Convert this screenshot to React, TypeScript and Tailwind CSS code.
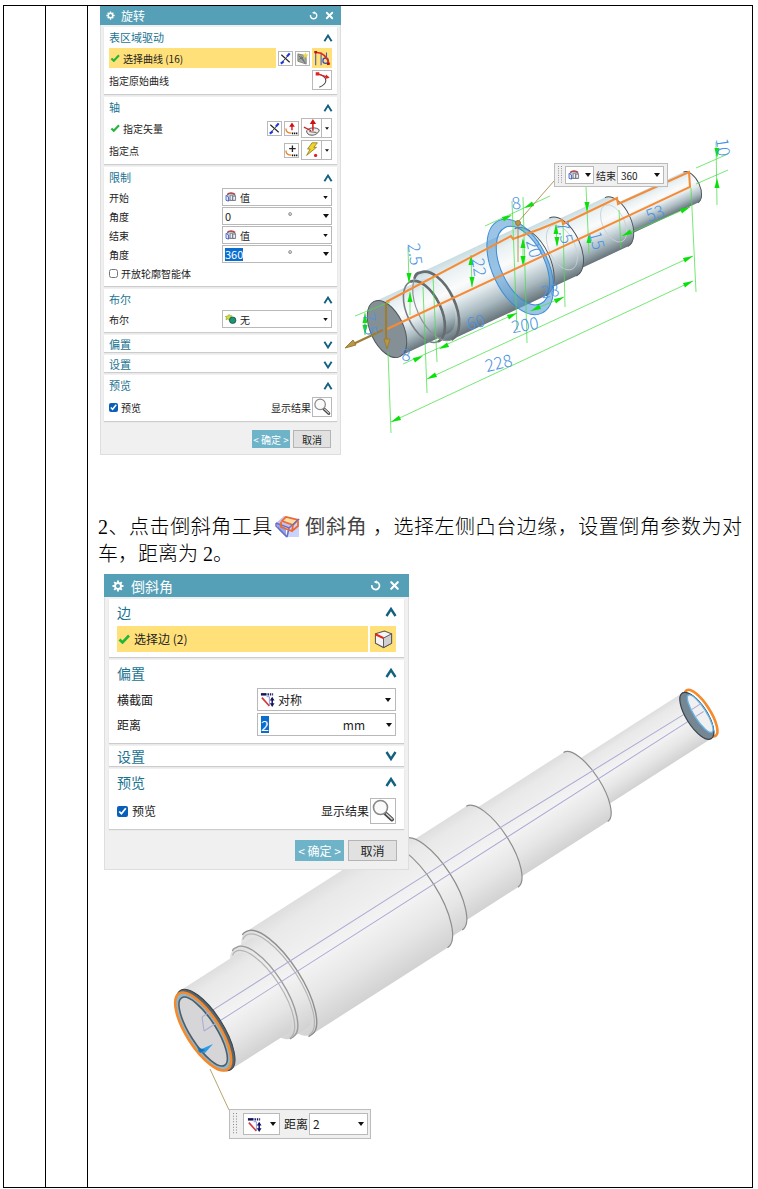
import { useState, type ReactNode } from 'react';
import { X } from 'lucide-react';
import clsx from 'clsx';

/* ---------- small icons ---------- */

function Caret({ className = 'h-[4px] w-[6px]' }: { className?: string }) {
    return (
        <svg viewBox="0 0 6 4" className={clsx('shrink-0', className)} aria-hidden="true">
            <path d="M0 0h6L3 4z" fill="#111" />
        </svg>
    );
}

function Fold({ open, large }: { open: boolean; large?: boolean }) {
    return (
        <svg viewBox="0 0 12 10" className={large ? 'h-[10px] w-[12px]' : 'h-[8px] w-[10px]'} aria-hidden="true">
            <path d={open ? 'M1.5 9L6 2l4.500 7' : 'M1.500 1L6 8l4.500-7'} fill="none" stroke="#12617f" strokeWidth="2.400" />
        </svg>
    );
}

function Gear({ large }: { large?: boolean }) {
    return (
        <svg viewBox="0 0 12 12" className={large ? 'size-[12px]' : 'size-[9px]'} aria-hidden="true">
            <path d="M6 .5v11M.5 6h11M2.200 2.200l7.600 7.600M9.800 2.200L2.200 9.800" stroke="#fff" strokeWidth="1.900" />
            <circle cx="6" cy="6" r="3" fill="#559fb7" stroke="#fff" strokeWidth="1.900" />
        </svg>
    );
}

function ResetIcon({ large }: { large?: boolean }) {
    return (
        <svg viewBox="0 0 12 12" className={large ? 'size-[11px]' : 'size-[9px]'} aria-hidden="true">
            <path d="M2 5.500A4.200 4.200 0 1 0 6.500 2" fill="none" stroke="#fff" strokeWidth="1.900" />
            <path d="M4 2.200L7.500 .2v4z" fill="#fff" />
        </svg>
    );
}

function Tick({ large }: { large?: boolean }) {
    return (
        <svg viewBox="0 0 12 10" className={large ? 'h-[10px] w-[12px]' : 'h-[8px] w-[10px]'} aria-hidden="true">
            <path d="M1.500 5.500L4.500 8.500L11 1.500" fill="none" stroke="#22b63a" strokeWidth="2.600" />
        </svg>
    );
}

function ReverseIcon() {
    return (
        <svg viewBox="0 0 14 14" className="size-[13px]" aria-hidden="true">
            <path d="M2.500 3l9 8" stroke="#222" strokeWidth="1.200" />
            <path d="M2.500 12L11 2.500" stroke="#333" strokeWidth="1" />
            <path d="M8.500 5l3-3.500M2 12.500l3-2.500" stroke="#1f3be0" strokeWidth="2.400" />
        </svg>
    );
}

function SketchIcon() {
    return (
        <svg viewBox="0 0 14 14" className="size-[13px]" aria-hidden="true">
            <path d="M2 2l9 2v9l-9-3z" fill="#a9aca0" stroke="#6a6f68" strokeWidth=".8" />
            <path d="M3 4l7 8M5 4l4 6M3 8l6-3" stroke="#555b66" strokeWidth=".8" />
            <path d="M10 0l1 2.500 2.500.5-2 1.500.5 2.500-2-1.500-2 1 .5-2.500L7 3l2.500-.5z" fill="#e8d84a" />
        </svg>
    );
}

function CurveRuleIcon() {
    return (
        <svg viewBox="0 0 20 20" className="size-[18px]" aria-hidden="true">
            <path d="M3 18V4M9 4v14M15 4v5" stroke="#4a5ab0" strokeWidth="1.200" fill="none" />
            <circle cx="14" cy="13" r="3" fill="none" stroke="#3452c4" strokeWidth="1.400" />
            <path d="M2 4c7-1 13 3 16 13" fill="none" stroke="#dd2a1c" strokeWidth="1.800" />
            <path d="M1.500 3.500h3M15.500 16.500h3" stroke="#c01010" strokeWidth="2.600" />
        </svg>
    );
}

function OriginCurveIcon() {
    return (
        <svg viewBox="0 0 20 20" className="size-[18px]" aria-hidden="true">
            <path d="M5 3c12 3 12 11 2 15" fill="none" stroke="#444" strokeWidth="1.200" />
            <path d="M4 3l13 4" stroke="#dd2222" strokeWidth="1.400" />
            <path d="M18.500 7.500l-5 1.500 1-5zM3 1.500h4V5H3z" fill="#dd2222" />
        </svg>
    );
}

function VectorDialogIcon() {
    return (
        <svg viewBox="0 0 14 14" className="size-[13px]" aria-hidden="true">
            <path d="M7.500 9V4" stroke="#d22" strokeWidth="1.600" />
            <path d="M7.500 .5l3 4.500H4.500z" fill="#c11" />
            <path d="M1 7c0 4 2 5 6 5" fill="none" stroke="#e9832a" strokeWidth="1.400" />
            <path d="M7.500 12.300h1.400m.8 0h1.400m.8 0h1.400" stroke="#111" strokeWidth="1.800" />
        </svg>
    );
}

function PointDialogIcon() {
    return (
        <svg viewBox="0 0 14 14" className="size-[13px]" aria-hidden="true">
            <path d="M8 1.500v7M4.500 5h7" stroke="#222" strokeWidth="1.400" />
            <path d="M1 7c0 4 2 5 6 5" fill="none" stroke="#e9832a" strokeWidth="1.400" />
            <path d="M7.500 12.300h1.400m.8 0h1.400m.8 0h1.400" stroke="#111" strokeWidth="1.800" />
        </svg>
    );
}

function FaceNormalIcon() {
    return (
        <svg viewBox="0 0 20 20" className="size-[18px]" aria-hidden="true">
            <path d="M4 13c3-4 11-4 14-1 0 3-4 6-8 6s-6-2-6-5z" fill="#ececec" stroke="#444" strokeWidth="1" />
            <path d="M1 9l8 4" stroke="#c22" strokeWidth="1.400" />
            <path d="M7 14l8 1" stroke="#555" strokeWidth="1" />
            <path d="M11 13V5" stroke="#d22" strokeWidth="1.800" />
            <path d="M11 0l3.500 5.500h-7z" fill="#c11" />
        </svg>
    );
}

function InferPointIcon() {
    return (
        <svg viewBox="0 0 20 20" className="size-[18px]" aria-hidden="true">
            <path d="M10 2h6l-4 5h3L4 16l4-7H5z" fill="#f2d22e" stroke="#8a7a18" strokeWidth=".9" />
            <circle cx="14" cy="16" r="1.800" fill="#d22" />
        </svg>
    );
}

function ValueIcon() {
    return (
        <svg viewBox="0 0 14 12" className="h-[10px] w-[12px] shrink-0" aria-hidden="true">
            <path d="M2 10V4c2-3 7-3 10 0v6H5z" fill="#c9ccd6" stroke="#4d556a" strokeWidth="1" />
            <path d="M2.500 3c2-2.500 7-2.500 9.500 0" fill="none" stroke="#b83a3a" strokeWidth="1.600" />
            <path d="M1 4v6l3 1V6z" fill="#dfe6fb" stroke="#3b5fc4" strokeWidth="1" />
            <path d="M6 4h3v6H6zM9 5h3.500v5H9z" fill="#eee" stroke="#6a6f80" strokeWidth=".9" />
        </svg>
    );
}

function BooleanIcon() {
    return (
        <svg viewBox="0 0 14 12" className="h-[10px] w-[12px] shrink-0" aria-hidden="true">
            <path d="M5 .5l1 1.500 2 0-1 2 1 2-2 0-1 1.500-2-1.500-2 1 .5-2.500L0 3l2.500-.5z" fill="#c9de3c" stroke="#7b8a20" strokeWidth=".6" />
            <circle cx="9" cy="7.500" r="3.900" fill="#1f9474" stroke="#124c3a" strokeWidth=".9" />
        </svg>
    );
}

function ChamferTypeIcon() {
    return (
        <svg viewBox="0 0 16 16" className="size-[15px] shrink-0" aria-hidden="true">
            <path d="M1 2.500h6" stroke="#14145c" strokeWidth="2.600" />
            <path d="M8 2.500h6" stroke="#14145c" strokeWidth="2.400" strokeDasharray="1.500 1" />
            <path d="M2 6l8 9" stroke="#d23535" strokeWidth="1.700" />
            <path d="M7 5h3v9" fill="none" stroke="#8a93e0" strokeWidth="1" />
            <path d="M13 7v6" stroke="#14145c" strokeWidth="1.600" />
            <path d="M10.500 9l2.500-4 2.500 4zM10.500 12l2.500 4 2.500-4z" fill="#14145c" />
        </svg>
    );
}

function EdgeCubeIcon() {
    return (
        <svg viewBox="0 0 20 20" className="size-[19px]" aria-hidden="true">
            <path d="M1.500 4L11 1l7.500 3v10L10 18.500 1.500 14z" fill="#f4f4f4" stroke="#555" strokeWidth="1.100" />
            <path d="M10 8.500l8.500-4.500v10L10 18.500z" fill="#cfcfd2" stroke="#555" strokeWidth="1" />
            <path d="M1.500 4.500L10 8.500" stroke="#e0261c" strokeWidth="2.200" />
        </svg>
    );
}

function Magnifier({ large }: { large?: boolean }) {
    return (
        <svg viewBox="0 0 24 24" className={large ? 'size-[24px]' : 'size-[18px]'} aria-hidden="true">
            <path d="M14.500 14.500l6.500 6" stroke="#444" strokeWidth="4" strokeLinecap="round" />
            <path d="M15 14.500l6.500 6" stroke="#d8d8d8" strokeWidth="1.600" />
            <circle cx="9.500" cy="8.500" r="7" fill="#fafafa" stroke="#888" strokeWidth="1.600" />
        </svg>
    );
}

function ChamferToolIcon() {
    return (
        <svg viewBox="0 0 27 26" className="mx-[2px] inline h-[26px] w-[27px] align-[-5px]" aria-hidden="true">
            <path d="M13 14l11-5v15H11z" fill="#c9d3fb" />
            <path d="M1 10l10 5v9L4 17z" fill="#8fa4ea" />
            <path d="M1 10l8-7 15 3-10 9z" fill="#c7bfe4" />
            <path d="M7 8l4-4 12 3-5 5z" fill="#fbe0a6" stroke="#f0672c" strokeWidth="1.700" />
            <path d="M1 10l13 5 10-9M1 10v3l11 11M14 15l-2 9" fill="none" stroke="#6a6fc4" strokeWidth="1.500" />
            <path d="M6 9v5l11 4 1-6M17 18l6-5V8" fill="none" stroke="#f0672c" strokeWidth="1.700" />
        </svg>
    );
}

/* ---------- dialog parts ---------- */

function Dialog({ title, large, children }: { title: string; large?: boolean; children: ReactNode }) {
    return (
        <section
            aria-label={title}
            className={clsx(
                'relative z-10 shrink-0 border border-[#dedede] bg-[#f0f0f0] text-[#222]',
                large ? 'w-[305px] text-[12px]' : 'w-[241px] text-[10px]',
            )}
        >
            <header
                className={clsx(
                    '-mx-px -mt-px flex items-center bg-[#559fb7] text-white',
                    large ? 'mb-[2px] h-[23px] gap-[7px] px-[8px] text-[14px]' : 'mb-[2px] h-[19px] gap-[6px] px-[6px] text-[12px]',
                )}
            >
                <Gear large={large} />
                <h2 className="flex-1 leading-none">{title}</h2>
                <button aria-label="重置">
                    <ResetIcon large={large} />
                </button>
                <button aria-label="关闭">
                    <X className={large ? 'size-[13px]' : 'size-[11px]'} strokeWidth={4} />
                </button>
            </header>
            <div className={clsx('flex flex-col gap-[3px]', large ? 'px-[4px]' : 'px-[3px]')}>{children}</div>
            <footer className={clsx('flex justify-end', large ? 'gap-[4px] px-[11px] pt-[11px] pb-[8px]' : 'gap-[3px] px-[9px] pt-[9px] pb-[6px]')}>
                <button className={clsx('bg-[#6fb3c8] whitespace-nowrap text-white', large ? 'h-[21px] w-[49px]' : 'h-[18px] w-[38px]')}>
                    &lt; 确定 &gt;
                </button>
                <button className={clsx('border border-[#b4b4b4] bg-[#e1e1e1] whitespace-nowrap', large ? 'h-[21px] w-[49px]' : 'h-[18px] w-[38px]')}>
                    取消
                </button>
            </footer>
        </section>
    );
}

function Group({ title, large, collapsed, children }: { title: string; large?: boolean; collapsed?: boolean; children?: ReactNode }) {
    return (
        <div className={clsx('bg-white shadow-[0_1px_1px_#cccccc]', large ? 'px-[8px]' : 'px-[5px]', !collapsed && (large ? 'pb-[5px]' : 'pb-[4px]'))}>
            <h3
                className={clsx(
                    'flex items-center justify-between text-[#1a7391]',
                    large ? 'text-[14px]' : 'text-[11px]',
                    collapsed ? (large ? 'h-[20px]' : 'h-[17px] pt-[2px]') : large ? 'h-[26px]' : 'h-[21px]',
                )}
            >
                <span className="leading-none">{title}</span>
                <button aria-label={title} aria-expanded={!collapsed} className="-mr-px">
                    <Fold open={!collapsed} large={large} />
                </button>
            </h3>
            {children}
        </div>
    );
}

function IconButton({ label, big, children }: { label: string; big?: boolean; children: ReactNode }) {
    return (
        <button
            aria-label={label}
            className={clsx('flex shrink-0 items-center justify-center border border-[#b9b9b9] bg-white', big ? 'size-[20px]' : 'size-[15px]')}
        >
            {children}
        </button>
    );
}

function SplitButton({ label, children }: { label: string; children: ReactNode }) {
    return (
        <span className="flex h-[20px] w-[31px] border border-[#b9b9b9] bg-white">
            <button aria-label={label} className="flex flex-1 items-center justify-center border-r border-[#b9b9b9]">
                {children}
            </button>
            <button aria-label={`${label}选项`} className="flex w-[9px] items-center justify-center">
                <Caret className="h-[3px] w-[4px]" />
            </button>
        </span>
    );
}

function SelectField({ id, label, value, icon, large }: { id: string; label: string; value: string; icon: ReactNode; large?: boolean }) {
    return (
        <div className={clsx('flex items-center', large ? 'h-[23px]' : 'h-[18px]')}>
            <label htmlFor={id} className="flex-1">
                {label}
            </label>
            <span
                className={clsx(
                    'flex h-full items-center gap-[3px] border border-[#b9b9b9] bg-white pl-[2px]',
                    large ? 'w-[139px] pr-[4px]' : 'w-[110px] pr-[3px]',
                )}
            >
                {icon}
                <select id={id} className="min-w-0 flex-1 appearance-none bg-transparent outline-none">
                    <option>{value}</option>
                </select>
                <Caret className={large ? 'h-[4px] w-[6px]' : 'h-[3px] w-[5px]'} />
            </span>
        </div>
    );
}

function ValueField({ id, label, value, unit, selected, large }: { id: string; label: string; value: string; unit: string; selected?: boolean; large?: boolean }) {
    const [text, setText] = useState(value);
    return (
        <div className={clsx('flex items-center', large ? 'h-[23px]' : 'h-[18px]')}>
            <label htmlFor={id} className="flex-1">
                {label}
            </label>
            <span
                className={clsx(
                    'flex h-full items-center border border-[#b9b9b9] bg-white',
                    large ? 'w-[139px] pr-[3px] pl-[3px] text-[14px]' : 'w-[110px] pr-[2px] pl-[2px] text-[11px]',
                )}
            >
                <input
                    id={id}
                    value={text}
                    onChange={(e) => setText(e.target.value)}
                    className={clsx(
                        'field-sizing-content leading-none outline-none',
                        selected && 'bg-[#0a6ed1] text-white',
                        large ? 'h-[17px]' : 'h-[13px]',
                    )}
                />
                <span className={clsx('ml-auto', large ? 'mr-[21px] text-[12px]' : 'mr-[31px]')}>{unit}</span>
                <button aria-label={`${label}选项`}>
                    <Caret />
                </button>
            </span>
        </div>
    );
}

function PreviewRow({ id, large }: { id: string; large?: boolean }) {
    return (
        <div className={clsx('flex items-center', large ? 'mt-[3px] h-[26px]' : 'mt-px h-[20px]')}>
            <input id={id} type="checkbox" defaultChecked className={clsx('accent-[#0a5fb8]', large ? 'mr-[4px] size-[11px]' : 'mr-[3px] size-[9px]')} />
            <label htmlFor={id} className="flex-1">
                预览
            </label>
            <span className="mr-px">显示结果</span>
            <button
                aria-label="显示结果"
                className={clsx('flex items-center justify-center border border-[#b9b9b9] bg-white', large ? 'size-[26px]' : 'size-[20px]')}
            >
                <Magnifier large={large} />
            </button>
        </div>
    );
}

function RevolveDialog() {
    return (
        <Dialog title="旋转">
            <Group title="表区域驱动">
                <div className="flex h-[20px] items-center gap-[2px]">
                    <span className="flex h-full flex-1 items-center gap-[3px] bg-[#ffe079] pl-px">
                        <Tick />
                        选择曲线 (16)
                    </span>
                    <IconButton label="反向">
                        <ReverseIcon />
                    </IconButton>
                    <IconButton label="绘制截面">
                        <SketchIcon />
                    </IconButton>
                    <button aria-label="曲线" className="flex size-[20px] items-center justify-center bg-[#ffe079]">
                        <CurveRuleIcon />
                    </button>
                </div>
                <div className="mt-[2px] flex h-[20px] items-center justify-between">
                    <span>指定原始曲线</span>
                    <IconButton label="指定原始曲线" big>
                        <OriginCurveIcon />
                    </IconButton>
                </div>
            </Group>
            <Group title="轴">
                <div className="flex h-[20px] items-center gap-[2px]">
                    <span className="flex flex-1 items-center gap-[3px] pl-px">
                        <Tick />
                        指定矢量
                    </span>
                    <IconButton label="反向">
                        <ReverseIcon />
                    </IconButton>
                    <IconButton label="矢量对话框">
                        <VectorDialogIcon />
                    </IconButton>
                    <SplitButton label="面/平面法向">
                        <FaceNormalIcon />
                    </SplitButton>
                </div>
                <div className="mt-[2px] flex h-[20px] items-center gap-[2px]">
                    <span className="flex-1">指定点</span>
                    <IconButton label="点对话框">
                        <PointDialogIcon />
                    </IconButton>
                    <SplitButton label="自动判断的点">
                        <InferPointIcon />
                    </SplitButton>
                </div>
            </Group>
            <Group title="限制">
                <div className="flex flex-col gap-px">
                    <SelectField id="start" label="开始" value="值" icon={<ValueIcon />} />
                    <ValueField id="start-angle" label="角度" value="0" unit="°" />
                    <SelectField id="end" label="结束" value="值" icon={<ValueIcon />} />
                    <ValueField id="end-angle" label="角度" value="360" unit="°" selected />
                    <div className="flex h-[18px] items-center gap-[3px]">
                        <input id="open-profile" type="checkbox" className="size-[9px]" />
                        <label htmlFor="open-profile">开放轮廓智能体</label>
                    </div>
                </div>
            </Group>
            <Group title="布尔">
                <SelectField id="boolean" label="布尔" value="无" icon={<BooleanIcon />} />
            </Group>
            <Group title="偏置" collapsed />
            <Group title="设置" collapsed />
            <Group title="预览">
                <PreviewRow id="revolve-preview" />
            </Group>
        </Dialog>
    );
}

function ChamferDialog() {
    return (
        <Dialog title="倒斜角" large>
            <Group title="边" large>
                <div className="mt-px flex h-[26px] gap-[2px]">
                    <span className="flex flex-1 items-center gap-[4px] bg-[#ffe079] pl-px">
                        <Tick large />
                        选择边 (2)
                    </span>
                    <button aria-label="选择边" className="flex size-[26px] items-center justify-center bg-[#ffe079]">
                        <EdgeCubeIcon />
                    </button>
                </div>
            </Group>
            <Group title="偏置" large>
                <div className="flex flex-col gap-[2px] py-[2px]">
                    <SelectField id="section" label="横截面" value="对称" icon={<ChamferTypeIcon />} large />
                    <ValueField id="distance" label="距离" value="2" unit="mm" selected large />
                </div>
            </Group>
            <Group title="设置" large collapsed />
            <Group title="预览" large>
                <PreviewRow id="chamfer-preview" large />
            </Group>
        </Dialog>
    );
}

/* ---------- floating input bars over the models ---------- */

function Grip() {
    return (
        <svg viewBox="0 0 6 20" preserveAspectRatio="none" className="h-full w-[6px] shrink-0" aria-hidden="true">
            <path d="M1.500 0v20M4.500 0v20" stroke="#888" strokeDasharray="1 1.500" />
        </svg>
    );
}

function FloatingBar({ id, label, value, icon, large }: { id: string; label: string; value: string; icon: ReactNode; large?: boolean }) {
    return (
        <div
            className={clsx(
                'flex items-center border border-[#bcbcbc] bg-[#f0f0f0] text-[#222]',
                large ? 'h-[30px] w-[142px] py-[3px] pr-[2px] pl-[2px] text-[12px]' : 'h-[24px] w-[114px] py-[2px] pr-[3px] pl-[2px] text-[10px]',
            )}
        >
            <Grip />
            <button
                aria-label={`${label}类型`}
                className={clsx(
                    'flex h-full items-center justify-between border border-[#b9b9b9] bg-white',
                    large ? 'mr-[4px] ml-[5px] w-[37px] px-[3px]' : 'mr-[2px] ml-[2px] w-[29px] px-[2px]',
                )}
            >
                {icon}
                <Caret />
            </button>
            <label htmlFor={id} className="whitespace-nowrap">
                {label}
            </label>
            <span className="ml-px flex h-full min-w-0 flex-1 items-center border border-[#b9b9b9] bg-white px-[3px]">
                <input id={id} defaultValue={value} className="w-full min-w-0 outline-none" />
                <Caret />
            </span>
        </div>
    );
}

/* ---------- revolved shaft ---------- */

type Seg = { from: number; to: number; r: number };

// distances run along the shaft axis, listed from the far end to the near end
const REVOLVE_SEGS: Seg[] = [
    { from: 253, to: 335, r: 17 },
    { from: 194, to: 253, r: 27 },
    { from: 158, to: 194, r: 32 },
    { from: 54, to: 158, r: 37 },
    { from: 0, to: 54, r: 30 },
];

const CHAMFER_SEGS: Seg[] = [
    { from: 453, to: 585, r: 27 },
    { from: 342, to: 453, r: 41 },
    { from: 272, to: 342, r: 48 },
    { from: 250, to: 272, r: 54 },
    { from: 89, to: 250, r: 61 },
    { from: 70, to: 89, r: 53 },
    { from: 0, to: 70, r: 47 },
];

function segPath({ from, to, r }: Seg, ratio: number) {
    const rx = r * ratio;
    return `M${from} ${-r}H${to}A${rx} ${r} 0 0 1 ${to} ${r}H${from}A${rx} ${r} 0 0 1 ${from} ${-r}Z`;
}

function rimPath({ to, r }: Seg, ratio: number) {
    return `M${to} ${-r}A${r * ratio} ${r} 0 0 1 ${to} ${r}`;
}

// x1, y1, x2, y2
const DIM_LINES = [
    [388, 352, 391, 433], [391, 422, 693, 281], [691, 188, 696, 292], [427, 379, 693, 256],
    [423, 287, 427, 393], [433, 277, 437, 362], [403, 364, 517, 313], [408, 247, 409, 283],
    [410, 292, 410, 315], [471, 255, 472, 287], [365, 313, 365, 335], [355, 316, 390, 302],
    [485, 226, 550, 196], [512, 201, 517, 330], [523, 197, 527, 343], [523, 240, 523, 264],
    [563, 221, 565, 307], [556, 225, 557, 245], [586, 187, 589, 253], [619, 210, 621, 248],
    [622, 236, 690, 207], [530, 311, 564, 297], [716, 142, 717, 205], [696, 168, 728, 154],
    [696, 184, 728, 170],
];

// x, y, heading of the tip in degrees
const DIM_ARROWS = [
    [391, 422, 155], [693, 281, -25], [427, 379, 155], [693, 256, -25], [423, 356, -25], [439, 349, 155],
    [517, 313, -25], [409, 283, 90], [410, 292, -90], [471, 255, -90], [472, 287, 90], [365, 313, -90],
    [365, 335, 90], [512, 215, -25], [524, 208, 155], [523, 238, -90], [523, 266, 90], [556, 224, -90],
    [557, 247, 90], [587, 212, 90], [589, 233, -90], [622, 236, 155], [690, 207, -25], [531, 311, 155],
    [564, 297, -25], [717, 158, 90], [717, 178, -90],
];

const DIM_TEXTS: [string, number, number, number][] = [
    ['228', 500, 369, -14], ['200', 526, 331, -10], ['60', 477, 328, -14], ['2.5', 409, 255, 82],
    ['22', 473, 268, 82], ['8', 517, 209, -8], ['8', 406, 361, 0], ['53', 657, 219, -20],
    ['15', 591, 242, 75], ['7.5', 559, 234, 75], ['10', 717, 148, 82], ['20', 528, 250, 75],
    ['28', 551, 297, -10], ['7.5', 364, 325, 82],
];

function RevolveModel() {
    return (
        <svg viewBox="341 6 411 448" className="h-[448px] w-[411px] max-w-none text-[17px]" role="img" aria-label="旋转预览模型">
            <defs>
                <linearGradient id="steel" x1="0" y1="0" x2="0" y2="1">
                    <stop offset="0" stopColor="#c9dde2" />
                    <stop offset=".16" stopColor="#e9f1f3" />
                    <stop offset=".38" stopColor="#fbfbfb" />
                    <stop offset=".55" stopColor="#e3ebee" />
                    <stop offset=".78" stopColor="#a9b9c0" />
                    <stop offset="1" stopColor="#66737a" />
                </linearGradient>
            </defs>
            <g transform="translate(387 329) rotate(-25)">
                {REVOLVE_SEGS.map((s) => (
                    <g key={s.to} fill="none">
                        <path d={segPath(s, 0.54)} fill="url(#steel)" />
                        <path d={rimPath(s, 0.54)} stroke={s.to === 54 ? 'none' : '#4a5054'} strokeWidth=".9" />
                    </g>
                ))}
                <ellipse cx="41" rx="17" ry="33" fill="none" stroke="#777f83" strokeWidth="1.600" />
                <path d="M41-33a17 33 0 0 1 0 66" fill="none" stroke="#666d71" strokeWidth="2.600" />
                <ellipse cx="54" rx="19" ry="37" fill="none" stroke="#8b9295" strokeWidth="1.200" />
                <path d="M46-34c3-4 6-4 8-3a19 37 0 0 1 0 74" fill="none" stroke="#666d71" strokeWidth="2.600" />
                <ellipse rx="16.500" ry="30.500" fill="#859096" stroke="#50585c" />
                <path
                    d="M147-51a28 51 0 0 1 0 102a28 51 0 0 1 0-102zM150-42a22 42 0 0 0 0 84a22 42 0 0 0 0-84z"
                    fill="#5d9fd6"
                    fillOpacity=".62"
                    fillRule="evenodd"
                    stroke="#3a8bd6"
                    strokeWidth="1"
                />
                <ellipse cx="193" rx="13" ry="24" fill="none" stroke="#c8d0d3" strokeWidth=".8" />
                <ellipse cx="250" rx="11" ry="20" fill="none" stroke="#c8d0d3" strokeWidth=".8" />
            </g>
            <g stroke="#46e046" strokeWidth="1">
                {DIM_LINES.map(([x1, y1, x2, y2]) => (
                    <line key={`${x1}-${y1}`} x1={x1} y1={y1} x2={x2} y2={y2} strokeOpacity=".75" />
                ))}
            </g>
            <g fill="#0be00b">
                {DIM_ARROWS.map(([x, y, a]) => (
                    <path key={`${x}-${y}`} d="M0 0L-10-2.500V2.500Z" transform={`translate(${x} ${y}) rotate(${a})`} />
                ))}
            </g>
            <path
                d="M386 302l125-66 2 3 27-10 22-9 1 4 54-26 1 6 71-32 1 15L387 329"
                fill="none"
                stroke="#f68b36"
                strokeWidth="2"
            />
            <g stroke="#9c7d34" fill="#b8964a">
                <path d="M386 303v38M383 330l-34 16" strokeWidth="2.200" />
                <path d="M387 349l-3-10h6zM345 348l8-8 3 5z" />
                <path d="M554 181l-36 41v40" fill="none" strokeWidth=".8" />
                <circle cx="518" cy="223" r="2.500" />
            </g>
            <g fill="#4b93e2" textAnchor="middle" className="font-light">
                {DIM_TEXTS.map(([text, x, y, a]) => (
                    <text key={`${x}-${y}`} transform={`translate(${x} ${y}) rotate(${a})`}>
                        {text}
                    </text>
                ))}
            </g>
        </svg>
    );
}

/* ---------- chamfered shaft ---------- */

function ChamferModel() {
    return (
        <svg viewBox="88 573 664 600" className="h-[600px] w-[664px] max-w-none" role="img" aria-label="倒斜角预览模型">
            <defs>
                <linearGradient id="ghost" x1="0" y1="0" x2="0" y2="1">
                    <stop offset="0" stopColor="#dedede" />
                    <stop offset=".12" stopColor="#e9e9e9" />
                    <stop offset=".5" stopColor="#f3f3f3" />
                    <stop offset=".75" stopColor="#e6e6e6" />
                    <stop offset="1" stopColor="#d2d2d2" />
                </linearGradient>
            </defs>
            <g transform="translate(204 1030) rotate(-32.600)" fill="none">
                {CHAMFER_SEGS.map((s) => (
                    <g key={s.to}>
                        <path d={segPath(s, 0.37)} fill="url(#ghost)" />
                        {s.to !== 70 && s.to !== 89 && <path d={rimPath(s, 0.37)} stroke="#8d8d8d" strokeWidth="1.200" />}
                    </g>
                ))}
                <path d="M67-52c2-2 3-1 5-1a20 53 0 0 1 0 106h-4" stroke="#9b9b9b" strokeWidth="1.400" />
                <path d="M65-48c1-2 3-2 4-2a19 50 0 0 1 0 102" stroke="#b3b3b3" strokeWidth="1.200" />
                <path d="M84-60c2-2 3-1 5-1a22 61 0 0 1 0 122h-4" stroke="#8f8f8f" strokeWidth="1.400" />
                <path d="M82-56c2-2 3-2 5-2a21 58 0 0 1 0 118" stroke="#b3b3b3" strokeWidth="1.200" />
                <path d="M0 0H585M6-13L342-12L585-8M0 0L6-13" stroke="#aaaad4" strokeWidth="1" />

                <ellipse cx="2" rx="17.500" ry="47" fill="#55646e" stroke="#394249" />
                <ellipse cx="-1" rx="16.500" ry="45" fill="#8db7cf" stroke="#f58a2c" strokeWidth="2.600" />
                <ellipse cx="-1" rx="13" ry="40" fill="#d6d6d8" stroke="#4e5d67" strokeWidth="1.600" />
                <path d="M0 0L6-13M0 0h13M6-13h9" stroke="#aaaad4" />

                <ellipse cx="590" rx="9" ry="27" stroke="#f58a2c" strokeWidth="2.600" />
                <ellipse cx="585" rx="10.500" ry="27" fill="#758792" stroke="#39424a" strokeWidth="1.200" />
                <ellipse cx="589" rx="6" ry="22" fill="#f0f0f0" stroke="#65b5e8" strokeWidth="1.400" />
                <path d="M583 0h10M583-8h12" stroke="#aaaad4" />
            </g>
            <path d="M197 1050l16-7-8 9z" fill="#2b9be6" />
            <path d="M200 1052l-3-6 8 3z" fill="#176fb5" />
            <path d="M210 1068l19 41" stroke="#b6a66e" strokeWidth="1" />
        </svg>
    );
}

export default function App() {
    return (
        <main className="bg-white pt-[5px] pr-[5px] pb-[2px] pl-[3px] font-['Noto_Sans_CJK_SC',sans-serif] text-black">
            <div className="grid grid-cols-[42px_42px_minmax(0,1fr)] divide-x divide-black border border-black">
                <div />
                <div />
                <div>
                    <div className="flex overflow-hidden pl-[12px]">
                        <RevolveDialog />
                        <div className="relative min-w-0 flex-1">
                            <RevolveModel />
                            <div className="absolute top-[157px] left-[213px]">
                                <FloatingBar id="bar-end" label="结束" value="360" icon={<ValueIcon />} />
                            </div>
                        </div>
                    </div>

                    <p className="mt-[58px] px-[10px] font-['Liberation_Serif','Noto_Sans_CJK_SC',serif] text-[20px] leading-[27px] font-light">
                        <span className="block [text-align-last:justify]">
                            2、点击倒斜角工具
                            <ChamferToolIcon />
                            <span className="mr-[6px] ml-px font-normal text-[#444]">倒斜角</span>
                            ，选择左侧凸台边缘，设置倒角参数为对
                        </span>
                        <span className="block">车，距离为 2。</span>
                    </p>

                    <div className="relative mt-[6px] min-h-[613px] overflow-hidden pl-[16px]">
                        <div className="absolute top-0 left-0">
                            <ChamferModel />
                        </div>
                        <ChamferDialog />
                        <div className="absolute top-[535px] left-[141px]">
                            <FloatingBar id="bar-distance" label="距离" value="2" icon={<ChamferTypeIcon />} large />
                        </div>
                    </div>
                </div>
            </div>
        </main>
    );
}
